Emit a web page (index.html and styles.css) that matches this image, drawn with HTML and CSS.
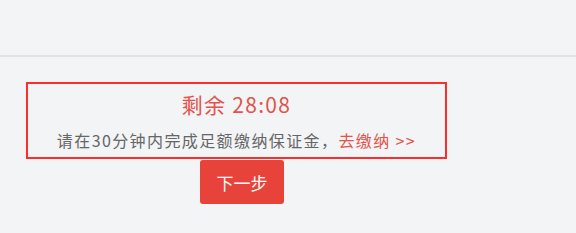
FILE: index.html
```html
<!DOCTYPE html>
<html lang="zh">
<head>
<meta charset="utf-8">
<link rel="stylesheet" href="styles.css">
</head>
<body>
<div class="header"></div>
<div class="content">
  <div class="notice">
    <div class="timer">剩余 28:08</div>
    <div class="tip">请在30分钟内完成足额缴纳保证金，<span class="pay">去缴纳 &gt;&gt;</span></div>
  </div>
  <button class="next">下一步</button>
</div>
</body>
</html>
```
FILE: styles.css
```css
html, body {
  margin: 0;
  padding: 0;
  background: #f2f4f6;
  font-family: "Noto Sans CJK SC", "Noto Sans", sans-serif;
}
.header {
  height: 55px;
  border-bottom: 2px solid #dfe4e8;
}
.content {
  display: flex;
  flex-direction: column;
  align-items: flex-start;
  padding: 25px 0 0 26px;
}
.notice {
  box-sizing: border-box;
  width: 421px;
  height: 77px;
  border: 2px solid #ff2c2c;
  display: flex;
  flex-direction: column;
  align-items: center;
  padding-top: 5px;
}
.timer {
  color: #e2534b;
  font-size: 21px;
  line-height: 30px;
  letter-spacing: 1.3px;
}
.tip {
  color: #666;
  font-size: 16px;
  line-height: 24px;
  letter-spacing: 1.4px;
  margin-top: 9px;
}
.pay {
  color: #e2534b;
}
.next {
  margin: 1px 0 0 174px;
  width: 84px;
  height: 44px;
  border: none;
  border-radius: 3px;
  background: #e8433a;
  color: #fff;
  font-family: "Noto Sans CJK SC", "Noto Sans", sans-serif;
  font-size: 17px;
}
```
